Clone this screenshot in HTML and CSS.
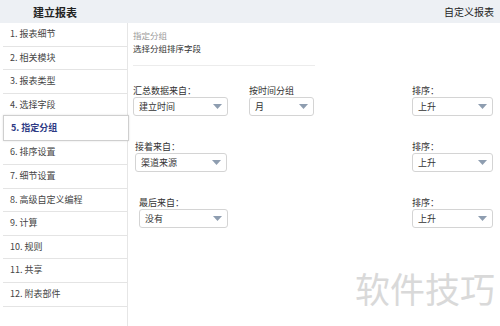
FILE: index.html
```html
<!DOCTYPE html>
<html lang="zh-CN">
<head>
  <meta charset="UTF-8" />
  <title>建立报表</title>
  <link rel="stylesheet" href="styles.css">
</head>
<body>
  <div class="header">
    <div class="header-title">建立报表</div>
    <div class="header-link">自定义报表</div>
  </div>

  <div class="main">
    <ul class="steps">
      <li>1. 报表细节</li>
      <li>2. 相关模块</li>
      <li>3. 报表类型</li>
      <li>4. 选择字段</li>
      <li class="active">5. 指定分组</li>
      <li>6. 排序设置</li>
      <li>7. 细节设置</li>
      <li>8. 高级自定义编程</li>
      <li>9. 计算</li>
      <li>10. 规则</li>
      <li>11. 共享</li>
      <li>12. 附表部件</li>
    </ul>

    <div class="content">
      <div class="intro">
        <div class="intro-title">指定分组</div>
        <div class="intro-text">选择分组排序字段</div>
      </div>

      <div class="group-form">
        <div class="field">
          <label>汇总数据来自：</label>
          <div class="select"><span>建立时间</span><svg width="9" height="5" viewBox="0 0 9 5"><path d="M0 0h9L4.5 5z" fill="#8e9db0"/></svg></div>
        </div>
        <div class="field field-time">
          <label>按时间分组</label>
          <div class="select"><span>月</span><svg width="9" height="5" viewBox="0 0 9 5"><path d="M0 0h9L4.5 5z" fill="#8e9db0"/></svg></div>
        </div>
        <div class="field field-sort">
          <label>排序：</label>
          <div class="select"><span>上升</span><svg width="9" height="5" viewBox="0 0 9 5"><path d="M0 0h9L4.5 5z" fill="#8e9db0"/></svg></div>
        </div>

        <div class="field field-second">
          <label>接着来自：</label>
          <div class="select"><span>渠道来源</span><svg width="9" height="5" viewBox="0 0 9 5"><path d="M0 0h9L4.5 5z" fill="#8e9db0"/></svg></div>
        </div>
        <div class="field field-sort">
          <label>排序：</label>
          <div class="select"><span>上升</span><svg width="9" height="5" viewBox="0 0 9 5"><path d="M0 0h9L4.5 5z" fill="#8e9db0"/></svg></div>
        </div>

        <div class="field field-third">
          <label>最后来自：</label>
          <div class="select"><span>没有</span><svg width="9" height="5" viewBox="0 0 9 5"><path d="M0 0h9L4.5 5z" fill="#8e9db0"/></svg></div>
        </div>
        <div class="field field-sort">
          <label>排序：</label>
          <div class="select"><span>上升</span><svg width="9" height="5" viewBox="0 0 9 5"><path d="M0 0h9L4.5 5z" fill="#8e9db0"/></svg></div>
        </div>
      </div>
    </div>
  </div>

  <div class="watermark">软件技巧</div>
</body>
</html>
```

FILE: styles.css
```css
body {
  margin: 0;
  width: 500px;
  height: 326px;
  overflow: hidden;
  background: white;
  font-family: "Noto Sans CJK SC", "Noto Sans", sans-serif;
  font-size: 9px;
  color: #333;
  position: relative;
}

.header {
  height: 23px;
  background-color: #edf0f4;
  display: flex;
  align-items: center;
  justify-content: space-between;
  padding: 0 6px 0 33px;
}

.header-title {
  font-size: 11px;
  font-weight: bold;
  color: #222;
}

.header-link {
  font-size: 10px;
  color: #222;
}

.main {
  display: flex;
}

.steps {
  list-style: none;
  margin: 0;
  padding: 0 0 0 3px;
  width: 124px;
  border-right: 1px solid #e6e6e6;
  height: 303px;
}

.steps li {
  height: 22.6px;
  line-height: 22.6px;
  border-bottom: 1px solid #e4e4e4;
  padding-left: 7px;
  color: #444;
}

.steps li.active {
  height: 24px;
  line-height: 24px;
  border: 1px solid #cfcfcf;
  margin-right: -2px;
  margin-top: -2px;
  color: #2e3a84;
  font-weight: bold;
  background: white;
  box-shadow: 0 0 2px rgba(0, 0, 0, 0.12);
  position: relative;
}

.content {
  padding: 6px 0 0 5px;
  flex: 1;
}

.intro {
  width: 182px;
  padding-bottom: 11px;
  border-bottom: 1px solid #ececec;
  font-size: 8.5px;
  line-height: 12.5px;
}

.intro-title {
  color: #9a9a9a;
}

.intro-text {
  color: #333;
}

.group-form {
  display: grid;
  grid-template-columns: 116px 163px 80px;
  row-gap: 26px;
  margin-top: 20px;
}

.field label {
  display: block;
  line-height: 10px;
  color: #333;
}

.select {
  margin-top: 1px;
  height: 17px;
  border: 1px solid #d4d4d4;
  border-radius: 3px;
  display: flex;
  align-items: center;
  justify-content: space-between;
  padding: 0 5px;
  width: 83px;
  color: #333;
}

.field-time .select {
  width: 53px;
}

.field-sort {
  grid-column: 3;
}

.field-sort .select {
  width: 69px;
}

.field-second {
  margin-left: 2px;
}

.field-second .select {
  width: 80px;
}

.field-third {
  margin-left: 6px;
}

.field-third .select {
  width: 77px;
}

.watermark {
  position: absolute;
  left: 355px;
  top: 266px;
  font-size: 35px;
  line-height: 44px;
  color: #d9d9d9;
}
```
